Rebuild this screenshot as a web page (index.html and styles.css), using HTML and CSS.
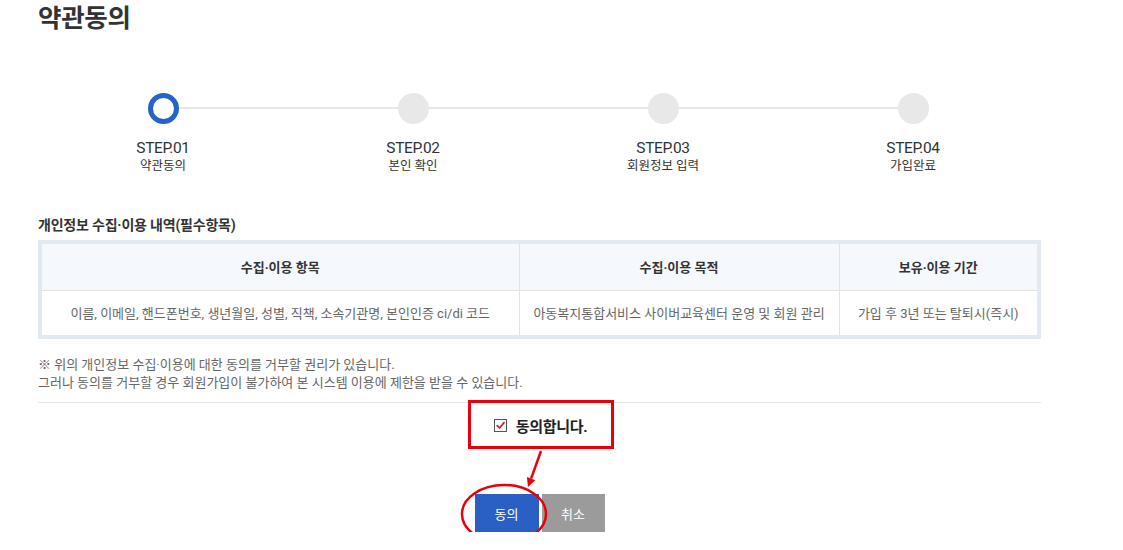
FILE: index.html
```html
<!DOCTYPE html>
<html lang="ko">
<head>
<meta charset="utf-8">
<title>약관동의</title>
<link rel="stylesheet" href="styles.css">
</head>
<body>
<div class="page">
  <h1 class="title">약관동의</h1>

  <ol class="steps">
    <li class="step active">
      <span class="dot"></span>
      <span class="step-no">STEP.01</span>
      <span class="step-name">약관동의</span>
    </li>
    <li class="step">
      <span class="dot"></span>
      <span class="step-no">STEP.02</span>
      <span class="step-name">본인 확인</span>
    </li>
    <li class="step">
      <span class="dot"></span>
      <span class="step-no">STEP.03</span>
      <span class="step-name">회원정보 입력</span>
    </li>
    <li class="step last">
      <span class="dot"></span>
      <span class="step-no">STEP.04</span>
      <span class="step-name">가입완료</span>
    </li>
  </ol>

  <h2 class="sec-title">개인정보 수집·이용 내역(필수항목)</h2>
  <div class="table-wrap">
    <table class="info-table">
      <colgroup>
        <col class="c1"><col class="c2"><col class="c3">
      </colgroup>
      <thead>
        <tr><th>수집·이용 항목</th><th>수집·이용 목적</th><th>보유·이용 기간</th></tr>
      </thead>
      <tbody>
        <tr>
          <td>이름, 이메일, 핸드폰번호, 생년월일, 성별, 직책, 소속기관명, 본인인증 ci/di 코드</td>
          <td>아동복지통합서비스 사이버교육센터 운영 및 회원 관리</td>
          <td>가입 후 3년 또는 탈퇴시(즉시)</td>
        </tr>
      </tbody>
    </table>
  </div>

  <p class="notes">※ 위의 개인정보 수집·이용에 대한 동의를 거부할 권리가 있습니다.<br>그러나 동의를 거부할 경우 회원가입이 불가하여 본 시스템 이용에 제한을 받을 수 있습니다.</p>

  <div class="agree-row">
    <label class="agree">
      <span class="chk"><svg viewBox="0 0 13 13" width="13" height="13"><path d="M3.2 6.6 L5.6 9 L10 3.6" fill="none" stroke="#c8202a" stroke-width="1.7" stroke-linecap="round" stroke-linejoin="round"/></svg></span>
      <span class="agree-text">동의합니다.</span>
    </label>
  </div>

  <div class="btn-row">
    <button class="btn btn-ok">동의</button>
    <button class="btn btn-cancel">취소</button>
    <svg class="annot" width="100" height="60" viewBox="0 0 100 60">
      <line x1="81" y1="-33" x2="71.1" y2="-5.4" stroke="#e8000b" stroke-width="2.5"/>
      <polygon points="68,3 75.3,-3.8 66.9,-7" fill="#e8000b"/>
      <ellipse cx="44" cy="30" rx="42" ry="29" fill="none" stroke="#e8000b" stroke-width="2.5"/>
    </svg>
  </div>
</div>
</body>
</html>
```

FILE: styles.css
```css
* { box-sizing: border-box; }
html, body { margin: 0; padding: 0; background: #fff; }
body {
  font-family: Roboto, "Noto Sans CJK KR", sans-serif;
  color: #333;
}
.page {
  width: 1040px;
  padding-left: 38px;
}
.title {
  margin: 0;
  font-size: 25.5px;
  line-height: 36px;
  font-weight: 700;
  color: #333;
  letter-spacing: -0.3px;
}

/* steps */
.steps {
  list-style: none;
  margin: 57px 0 0;
  padding: 0;
  display: grid;
  grid-template-columns: repeat(4, 250px);
}
.step {
  position: relative;
  display: flex;
  flex-direction: column;
  align-items: center;
}
.step::before {
  content: "";
  position: absolute;
  left: 50%;
  width: 100%;
  top: 14px;
  height: 2px;
  background: #e8e8e8;
  z-index: 0;
}
.step.last::before { display: none; }
.dot {
  position: relative;
  z-index: 1;
  width: 31px;
  height: 31px;
  border-radius: 50%;
  background: #e8e8e8;
}
.step.active .dot {
  background: #fff;
  border: 5px solid #2762c6;
}
.step-no {
  margin-top: 15px;
  font-size: 15.5px;
  line-height: 18px;
  color: #333;
  letter-spacing: -0.4px;
}
.step-name {
  font-size: 12.5px;
  line-height: 18px;
  color: #333;
}

/* section */
.sec-title {
  margin: 40px 0 0;
  font-size: 14px;
  line-height: 20px;
  font-weight: 700;
  color: #333;
  letter-spacing: -0.2px;
}
.table-wrap {
  margin-top: 5px;
  width: 1003px;
  border: 4px solid #e3e9f1;
}
.info-table {
  width: 100%;
  border-collapse: collapse;
  table-layout: fixed;
}
.c1 { width: 477px; }
.c2 { width: 320px; }
.info-table th, .info-table td {
  height: 45px;
  padding: 0 6px;
  text-align: center;
  font-size: 13px;
  letter-spacing: 0;
}
.info-table th {
  background: #f5f8fc;
  color: #333;
  font-weight: 700;
  border-bottom: 1px solid #e2e2e2;
  height: 46px;
}
.info-table td {
  color: #666;
  font-weight: 400;
}
.info-table th + th, .info-table td + td {
  border-left: 1px solid #e2e2e2;
}

.notes {
  margin: 17px 0 0;
  font-size: 13px;
  line-height: 18px;
  color: #666;
  letter-spacing: 0;
  padding-bottom: 10px;
  border-bottom: 1px solid #e6e6e6;
  width: 1003px;
}

.agree-row {
  width: 1003px;
  display: flex;
  justify-content: center;
  margin-top: 11px;
}
.agree {
  position: relative;
  display: inline-flex;
  align-items: center;
  gap: 9px;
  padding: 0 0 0 2px;
  height: 22px;
  cursor: pointer;
}
.agree::after {
  content: "";
  position: absolute;
  left: -24px;
  right: -27px;
  top: -14px;
  bottom: -13px;
  border: 3px solid #e8000b;
  pointer-events: none;
}
.chk {
  width: 13px;
  height: 13px;
  border: 1px solid #555;
  background: #fff;
  display: inline-flex;
}
.chk svg { display: block; margin: -1px; }
.agree-text {
  font-size: 15px;
  font-weight: 700;
  color: #222;
  letter-spacing: -0.3px;
}

.btn-row {
  position: relative;
  width: 1003px;
  display: flex;
  justify-content: center;
  gap: 3px;
  margin-top: 58px;
}
.btn {
  width: 64px;
  height: 38px;
  border: 0;
  font-family: Roboto, "Noto Sans CJK KR", sans-serif;
  font-size: 13px;
  color: #fff;
  padding: 0;
}
.btn-ok { background: #2a5fc3; }
.btn-cancel { background: #9b9b9b; width: 63px; }
.annot {
  position: absolute;
  left: 422px;
  top: -10px;
  overflow: visible;
  pointer-events: none;
}
```
